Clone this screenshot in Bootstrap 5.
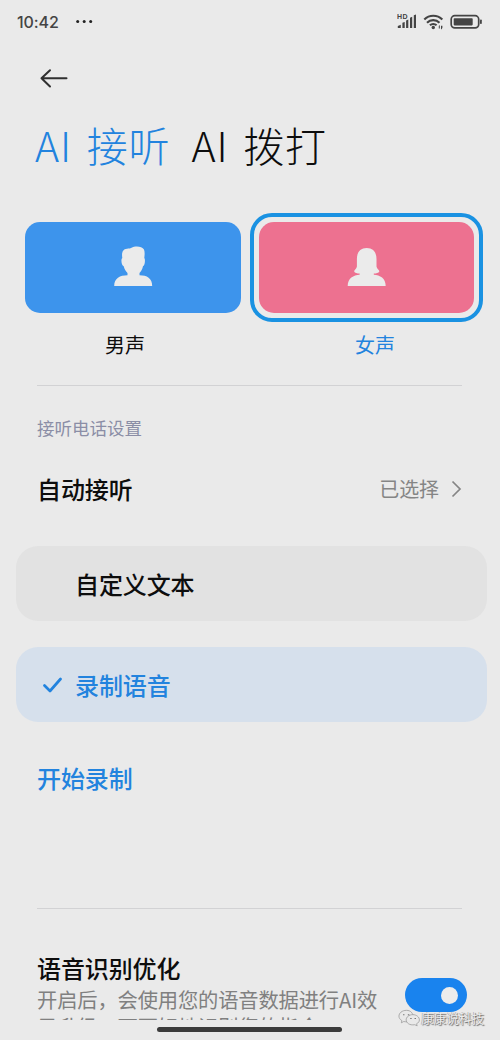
<!DOCTYPE html>
<html lang="zh-CN">
<head>
<meta charset="utf-8">
<meta name="viewport" content="width=device-width, initial-scale=1">
<title>AI 接听</title>
<link href="https://cdn.jsdelivr.net/npm/bootstrap@5.3.0/dist/css/bootstrap.min.css" rel="stylesheet">
<style>
:root{--page:#eaeaea;--blue:#2283de}
body{background:var(--page);font-family:"Noto Sans CJK SC",sans-serif;color:#0d0d0d;width:500px;height:1040px;overflow:hidden}
.phone{height:1040px;overflow:hidden}
svg{display:block;flex:none}
.status{height:44px;padding:0 17px 0 17px}
.clock{font:500 16px/44px Inter,sans-serif;color:#444;letter-spacing:-.1px;width:59px}
.topnav{height:68px;padding:24px 0 0 40px}
.tabs{height:70px;padding-left:35px;font-size:41px;line-height:64px;font-weight:300;white-space:nowrap;letter-spacing:.8px;word-spacing:5px}
.tabs .on{color:var(--blue);width:156.5px}
.blue{color:var(--blue)}
.voices{padding:31px 17px 0 17px}
.voice{width:233px}
.ring{height:109px;padding:5px;border:4px solid transparent;border-radius:22px}
.ring.on{border-color:#1a92e2}
.tile{height:91px;border-radius:15px}
.voice:first-child .tile{margin-left:-1px}
.male{background:#3d94ec}
.female{background:#ed7190}
.vname{font-size:20px;line-height:30px;margin-top:8px}
.rule{height:1px;background:#d2d2d4;margin:0 38px 0 37px}
.caption{font-size:17.5px;line-height:26px;color:#8b8ea6;padding-left:37px;margin-top:29px}
.item{font-size:24px;line-height:36px;font-weight:500;letter-spacing:-.1px}
.auto{height:36px;margin:30px 36px 0 37px}
.chosen{font-size:20px;color:#858585;font-weight:400}
.option{height:75px;border-radius:22px;margin:0 13px 0 16px;background:#e2e2e2}
.option.on{background:#d6e0ec;color:var(--blue)}
.mark-slot{width:59px;padding-left:27px}
.foot{margin:41px 33px 0 37px}
.desc{font-size:20.3px;line-height:27px;letter-spacing:-.15px;color:#808080;width:350px;height:34px;overflow:hidden;white-space:nowrap}
.toggle{width:62px;height:34px;border-radius:17px;background:#1983ee;padding:0 9px;margin-top:28px}
.knob{width:17px;height:17px;border-radius:50%;background:#ececec}
.homebar{left:157px;top:1027px;width:185px;height:5px;border-radius:3px;background:#3c3c3c}
.credit{left:398px;top:1006px;font-size:12.6px;line-height:24px;color:#ececec;text-shadow:1px 1px 1px #666,-.5px -.5px 0 #999;white-space:nowrap}
</style>
</head>
<body>
<main class="phone position-relative d-flex flex-column">
  <header class="status d-flex align-items-center">
    <span class="clock">10:42</span>
    <svg width="18" height="6" viewBox="0 0 18 6" fill="#222"><circle cx="1.7" cy="2.6" r="1.5"/><circle cx="8.2" cy="2.6" r="1.5"/><circle cx="14.7" cy="2.6" r="1.5"/></svg>
    <svg class="ms-auto" width="86" height="20" viewBox="397 12 86 20" fill="#444">
      <text x="397" y="19.300" font-family="Liberation Sans" font-size="7" font-weight="bold" textLength="10.500">HD</text>
      <path d="M397.800 28v-2l3-1.300V28zM402.400 28v-5.200l2.300-.8v6zM406.100 28v-7.600l2.200-1V28zM410 28V17.800l2.200-1V28zM413.800 28V15.300l2.200-.8V28z"/>
      <g fill="none" stroke="#444" stroke-width="2.100"><path d="M424.300 19.600a12.600 12.600 0 0 1 18 0M427 22.700a8.800 8.800 0 0 1 12.500 0M429.900 25.300a5 5 0 0 1 6.700 0"/></g>
      <circle cx="433.300" cy="27.500" r="1.700"/>
      <path d="M438.800 28.500v-2.500l1-1v3.500zM441 29.300v-3.600h1.400v2l-.8 1.600z"/>
      <rect x="451.200" y="15.700" width="27.500" height="12.200" rx="3.600" fill="none" stroke="#444" stroke-width="1.700"/>
      <rect x="453.700" y="18.200" width="19" height="7.200" rx=".8"/><rect x="480" y="19.400" width="1.800" height="4.700" rx=".8"/>
    </svg>
  </header>
  <nav class="topnav">
    <svg width="28" height="20" viewBox="0 0 28 20" fill="none" stroke="#303030" stroke-width="2" stroke-linecap="round" stroke-linejoin="round"><path d="M26.500 10.300H1.500M10 2.200 1.500 10.300 10 18.500"/></svg>
  </nav>
  <div class="tabs d-flex"><span class="on">AI 接听</span><span>AI 拨打</span></div>
  <section class="voices d-flex">
    <div class="voice text-center">
      <div class="ring"><div class="tile male d-flex justify-content-center">
        <svg width="40" height="42" viewBox="113 244 40 42" style="margin-top:22px" fill="#ebebeb"><path d="M122.300 258C121.500 253 122.500 249 127 248.700C129 248.600 130 248.900 131.500 247.800C135 245.600 142 246 144 249.500C145 252 144.600 255 144.300 258C145.500 259 145 265.500 143 266.300C142.300 269.500 141 271.500 139.500 273V275.200C147 275.300 152.200 278 152.200 286H114.200C114.200 278 120 275.300 127.500 275.200V273C126 271.500 124.500 269.500 123.700 266.300C121.400 265.500 120.700 259 122.300 258Z"/></svg>
      </div></div>
      <div class="vname" style="margin-left:-17px">男声</div>
    </div>
    <div class="voice text-center">
      <div class="ring on"><div class="tile female d-flex justify-content-center">
        <svg width="40" height="42" viewBox="347 244 40 42" style="margin-top:22px" fill="#ebebeb"><path d="M356.900 259C356.900 252 360.500 248 366.700 248S376.500 252 376.500 259V266.500C376.700 269 379.500 270 379.300 271.500C378.800 273 376 273.400 373.800 273.600V274.800C380 275.300 385.700 278 385.700 286H347.700C347.700 278 353.500 275.300 359.600 274.800V273.600C357.400 273.400 354.600 273 354.200 271.500C354 270 356.700 269 356.900 266.500Z"/></svg>
      </div></div>
      <div class="vname blue" style="margin-left:17px">女声</div>
    </div>
  </section>
  <div class="rule" style="margin-top:25px"></div>
  <div class="caption">接听电话设置</div>
  <div class="auto item d-flex align-items-center">
    <span>自动接听</span><span class="chosen ms-auto">已选择</span>
    <svg class="ms-2" width="17" height="18" viewBox="0 0 17 18" fill="none" stroke="#858585" stroke-width="1.700"><path d="M5.500 1.500 13 9l-7.500 7.500"/></svg>
  </div>
  <div class="option item d-flex align-items-center" style="margin-top:39px"><span class="mark-slot"></span><span>自定义文本</span></div>
  <div class="option item on d-flex align-items-center" style="margin-top:26px"><span class="mark-slot"><svg width="20" height="16" viewBox="0 0 20 16" fill="none" stroke="#2283de" stroke-width="2.700" stroke-linecap="round" stroke-linejoin="round"><path d="M1.500 8.500 7 14 17.500 2"/></svg></span><span>录制语音</span></div>
  <div class="item blue" style="margin:38px 0 0 37px">开始录制</div>
  <div class="rule" style="margin-top:112px"></div>
  <section class="foot d-flex justify-content-between">
    <div><div class="item">语音识别优化</div><div class="desc">开启后，会使用您的语音数据进行AI效<br>果升级，可更好地识别您的指令</div></div>
    <div class="toggle d-flex align-items-center justify-content-end"><span class="knob"></span></div>
  </section>
  <div class="homebar position-absolute"></div>
  <div class="credit position-absolute d-flex align-items-center"><svg width="23" height="18" viewBox="0 0 24 18" fill="#e9e9e9" stroke="#999" stroke-width=".8"><path d="M9 1C4 1 1 4 1 7c0 2 1 3.500 3 4.700L3.500 14 6 12.700c4 1 9-1 9.500-5C16 4 13 1 9 1z"/><path d="M15.500 5.500c-4 0-7 2.500-7 5.500s3.500 6 9 5l2.500 1.200-.6-2.200c2-1 2.900-2.300 2.900-4 0-3-3-5.500-6.800-5.500z"/><path d="M6 5v1M11 5v1M13.500 9v1M18 9v1" stroke="#777" stroke-width="1.500"/></svg><span>康康说科技</span></div>
</main>
<script src="https://cdn.jsdelivr.net/npm/bootstrap@5.3.0/dist/js/bootstrap.bundle.min.js"></script>
</body>
</html>
